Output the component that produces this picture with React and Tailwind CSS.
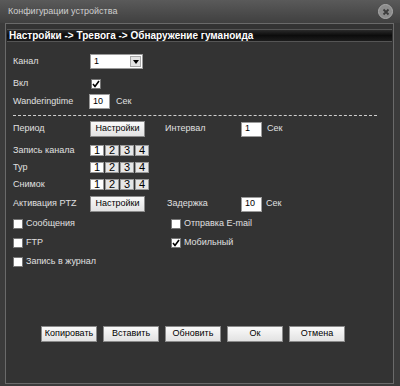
import React from 'react';

const font = { fontFamily: '"Liberation Sans", "DejaVu Sans", sans-serif' };

/** Поле ввода */
function Field({ value, className }) {
    return (
        <div
            className={
                'flex items-center h-[15px] bg-white border border-[#9a9a9a] pl-[3px] text-[9px] text-black ' +
                (className || 'w-[21px]')
            }
        >
            {value}
        </div>
    );
}

/** Кнопка */
function Btn({ children, className }) {
    return (
        <div
            className={
                'flex items-center justify-center h-[16px] bg-gradient-to-b from-[#fafafa] to-[#e2e2e2] border border-[#8a8a8a] text-[9px] text-black ' +
                (className || 'w-[55px]')
            }
        >
            {children}
        </div>
    );
}

/** Флажок */
function Check({ checked }) {
    return (
        <div className="flex items-center justify-center w-[10px] h-[10px] bg-white border border-[#777]">
            {checked && (
                <svg width="8" height="8" viewBox="0 0 8 8">
                    <path d="M1 4 L3 6.5 L7 1" stroke="#000" strokeWidth="1.6" fill="none" />
                </svg>
            )}
        </div>
    );
}

/** Каналы 1-4 */
function Channels() {
    return (
        <div className="flex gap-[1px]">
            {['1', '2', '3', '4'].map((n, i) => (
                <div
                    key={n}
                    className={
                        'flex items-center justify-center w-[14px] h-[11px] text-[11px] leading-none text-black border border-[#999] ' +
                        (i === 0 ? 'bg-white' : 'bg-[#e6e6e6]')
                    }
                >
                    {n}
                </div>
            ))}
        </div>
    );
}

function Row({ children, className }) {
    return <div className={'flex items-center ' + (className || '')}>{children}</div>;
}

function Label({ children, className }) {
    return <div className={'text-[9px] text-[#e0e0e0] ' + (className || 'w-[77px]')}>{children}</div>;
}

export default function App() {
    return (
        <div className="w-[400px] h-[386px] flex flex-col bg-[#3b3b3b] overflow-hidden" style={font}>
            {/* заголовок окна */}
            <div className="flex items-center justify-between h-[23px] px-[8px] bg-gradient-to-b from-[#5a5a5a] to-[#404040]">
                <span className="text-[9px] text-[#cfcfcf]">Конфигурации устройства</span>
                <div className="flex items-center justify-center w-[15px] h-[15px] rounded-full bg-[#8c8c8c] border border-[#aaa] mr-[-1px]">
                    <svg width="8" height="8" viewBox="0 0 8 8">
                        <path d="M1.5 1.5 L6.5 6.5 M6.5 1.5 L1.5 6.5" stroke="#3c3c3c" strokeWidth="1.8" />
                    </svg>
                </div>
            </div>

            {/* основная панель */}
            <div className="flex-1 ml-[5px] mr-[6px] mb-[2px] border border-[#6a6a6a] bg-[#333333] flex flex-col">
                <div className="mt-[5px] mx-[1px] h-[13px] flex items-center px-[2px] bg-gradient-to-b from-[#2a2a2a] via-[#0c0c0c] to-[#1c1c1c] border-y border-[#555]">
                    <span className="text-[10px] font-bold text-white">
                        Настройки -&gt; Тревога -&gt; Обнаружение гуманоида
                    </span>
                </div>

                <div className="flex flex-col pl-[7px] pr-[10px] pt-[12px]">
                    <Row className="h-[15px]">
                        <Label>Канал</Label>
                        <div className="flex items-center justify-between w-[53px] h-[15px] bg-white border border-[#9a9a9a] pl-[3px] pr-[1px] text-[9px] text-black">
                            1
                            <div className="flex items-center justify-center w-[11px] h-[11px] bg-[#e4e4e4] border border-[#aaa]">
                                <svg width="6" height="4" viewBox="0 0 6 4">
                                    <path d="M0 0 H6 L3 4 Z" fill="#000" />
                                </svg>
                            </div>
                        </div>
                    </Row>

                    <Row className="h-[11px] mt-[9px]">
                        <Label>Вкл</Label>
                        <div className="ml-[1px]">
                            <Check checked />
                        </div>
                    </Row>

                    <Row className="h-[15px] mt-[5px]">
                        <Label className="w-[76px]">Wanderingtime</Label>
                        <Field value="10" />
                        <span className="ml-[6px] text-[9px] text-[#e0e0e0]">Сек</span>
                    </Row>

                    <div className="mt-[6px] mr-[6px] border-t border-dashed border-[#cfcfcf]" />

                    <Row className="h-[16px] mt-[5px]">
                        <Label>Период</Label>
                        <Btn>Настройки</Btn>
                        <Label className="ml-[20px] w-[76px]">Интервал</Label>
                        <Field value="1" />
                        <span className="ml-[5px] text-[9px] text-[#e0e0e0]">Сек</span>
                    </Row>

                    <Row className="h-[11px] mt-[8px]">
                        <Label>Запись канала</Label>
                        <Channels />
                    </Row>
                    <Row className="h-[11px] mt-[6px]">
                        <Label>Тур</Label>
                        <Channels />
                    </Row>
                    <Row className="h-[11px] mt-[6px]">
                        <Label>Снимок</Label>
                        <Channels />
                    </Row>

                    <Row className="h-[16px] mt-[6px]">
                        <Label>Активация PTZ</Label>
                        <Btn>Настройки</Btn>
                        <Label className="ml-[22px] w-[74px]">Задержка</Label>
                        <Field value="10" />
                        <span className="ml-[4px] text-[9px] text-[#e0e0e0]">Сек</span>
                    </Row>

                    <div className="grid grid-cols-[158px_1fr] gap-y-[6px] mt-[5px]">
                        <Row className="gap-[3px] h-[13px]">
                            <Check />
                            <span className="text-[9px] text-[#e0e0e0]">Сообщения</span>
                        </Row>
                        <Row className="gap-[3px] h-[13px]">
                            <Check />
                            <span className="text-[9px] text-[#e0e0e0]">Отправка E-mail</span>
                        </Row>
                        <Row className="gap-[3px] h-[13px]">
                            <Check />
                            <span className="text-[9px] text-[#e0e0e0]">FTP</span>
                        </Row>
                        <Row className="gap-[3px] h-[13px]">
                            <Check checked />
                            <span className="text-[9px] text-[#e0e0e0]">Мобильный</span>
                        </Row>
                        <Row className="gap-[3px] h-[13px]">
                            <Check />
                            <span className="text-[9px] text-[#e0e0e0]">Запись в журнал</span>
                        </Row>
                    </div>
                </div>

                <div className="flex gap-[6px] pl-[35px] mt-[58px]">
                    <Btn className="w-[56px]">Копировать</Btn>
                    <Btn className="w-[56px]">Вставить</Btn>
                    <Btn className="w-[56px]">Обновить</Btn>
                    <Btn className="w-[56px]">Ок</Btn>
                    <Btn className="w-[56px]">Отмена</Btn>
                </div>
            </div>
        </div>
    );
}
